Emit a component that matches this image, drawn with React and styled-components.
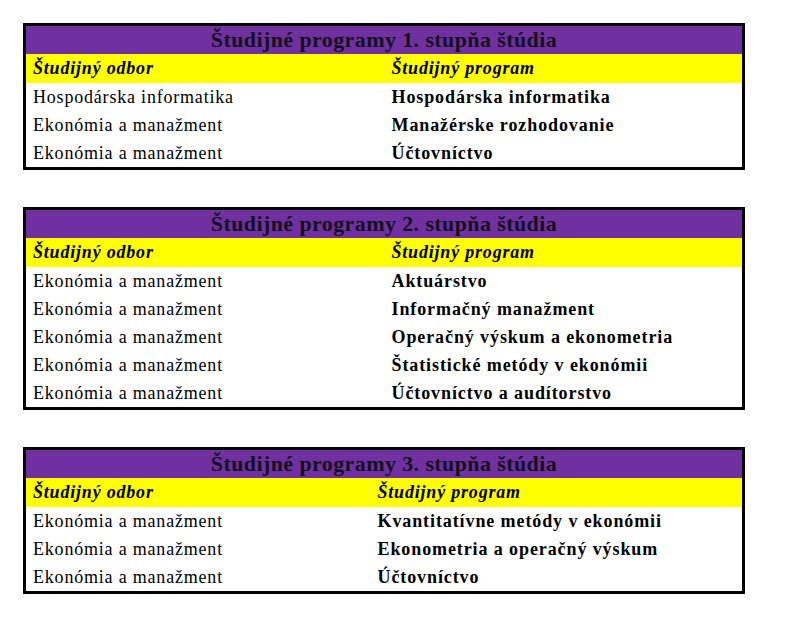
import React from "react";
import styled, { createGlobalStyle } from "styled-components";

const GlobalStyle = createGlobalStyle`
  html, body {
    margin: 0;
    padding: 0;
    background: #ffffff;
  }
  body {
    font-family: "Liberation Serif", "Times New Roman", serif;
    color: #000;
  }
`;

const Page = styled.div`
  display: flex;
  flex-direction: column;
  gap: 37px;
  padding: 23px 0 0 23px;
`;

const Table = styled.table`
  width: 722px;
  border: 3px solid #000;
  border-collapse: collapse;
  border-spacing: 0;
  table-layout: fixed;
`;

const TitleCell = styled.th`
  height: 28px;
  padding: 0;
  background: #7030a0;
  color: #12101c;
  font-size: 22px;
  letter-spacing: 0.4px;
  font-weight: bold;
  text-align: center;
  line-height: 28px;
`;

const HeadCell = styled.th`
  height: 29px;
  padding: 0 7px;
  background: #ffff00;
  font-size: 18px;
  letter-spacing: 0.8px;
  font-weight: bold;
  font-style: italic;
  text-align: left;
  line-height: 29px;
`;

const Cell = styled.td`
  height: 28px;
  padding: 0 7px;
  font-size: 18px;
  letter-spacing: ${(p) => (p.bold ? "0.9px" : "0.8px")};
  line-height: 28px;
  white-space: nowrap;
  font-weight: ${(p) => (p.bold ? "bold" : "normal")};
`;

const data = [
  {
    title: "Študijné programy 1. stupňa štúdia",
    split: 360,
    rows: [
      ["Hospodárska informatika", "Hospodárska informatika"],
      ["Ekonómia a manažment", "Manažérske rozhodovanie"],
      ["Ekonómia a manažment", "Účtovníctvo"],
    ],
  },
  {
    title: "Študijné programy 2. stupňa štúdia",
    split: 360,
    rows: [
      ["Ekonómia a manažment", "Aktuárstvo"],
      ["Ekonómia a manažment", "Informačný manažment"],
      ["Ekonómia a manažment", "Operačný výskum a ekonometria"],
      ["Ekonómia a manažment", "Štatistické metódy v ekonómii"],
      ["Ekonómia a manažment", "Účtovníctvo a audítorstvo"],
    ],
  },
  {
    title: "Študijné programy 3. stupňa štúdia",
    split: 346,
    rows: [
      ["Ekonómia a manažment", "Kvantitatívne metódy v ekonómii"],
      ["Ekonómia a manažment", "Ekonometria a operačný výskum"],
      ["Ekonómia a manažment", "Účtovníctvo"],
    ],
  },
];

const ProgramTable = ({ title, split, rows }) => (
  <Table>
    <colgroup>
      <col style={{ width: split }} />
      <col />
    </colgroup>
    <thead>
      <tr>
        <TitleCell colSpan={2}>{title}</TitleCell>
      </tr>
      <tr>
        <HeadCell>Študijný odbor</HeadCell>
        <HeadCell>Študijný program</HeadCell>
      </tr>
    </thead>
    <tbody>
      {rows.map(([field, program], i) => (
        <tr key={i}>
          <Cell>{field}</Cell>
          <Cell bold>{program}</Cell>
        </tr>
      ))}
    </tbody>
  </Table>
);

export default function App() {
  return (
    <>
      <GlobalStyle />
      <Page>
        {data.map((t) => (
          <ProgramTable key={t.title} {...t} />
        ))}
      </Page>
    </>
  );
}
